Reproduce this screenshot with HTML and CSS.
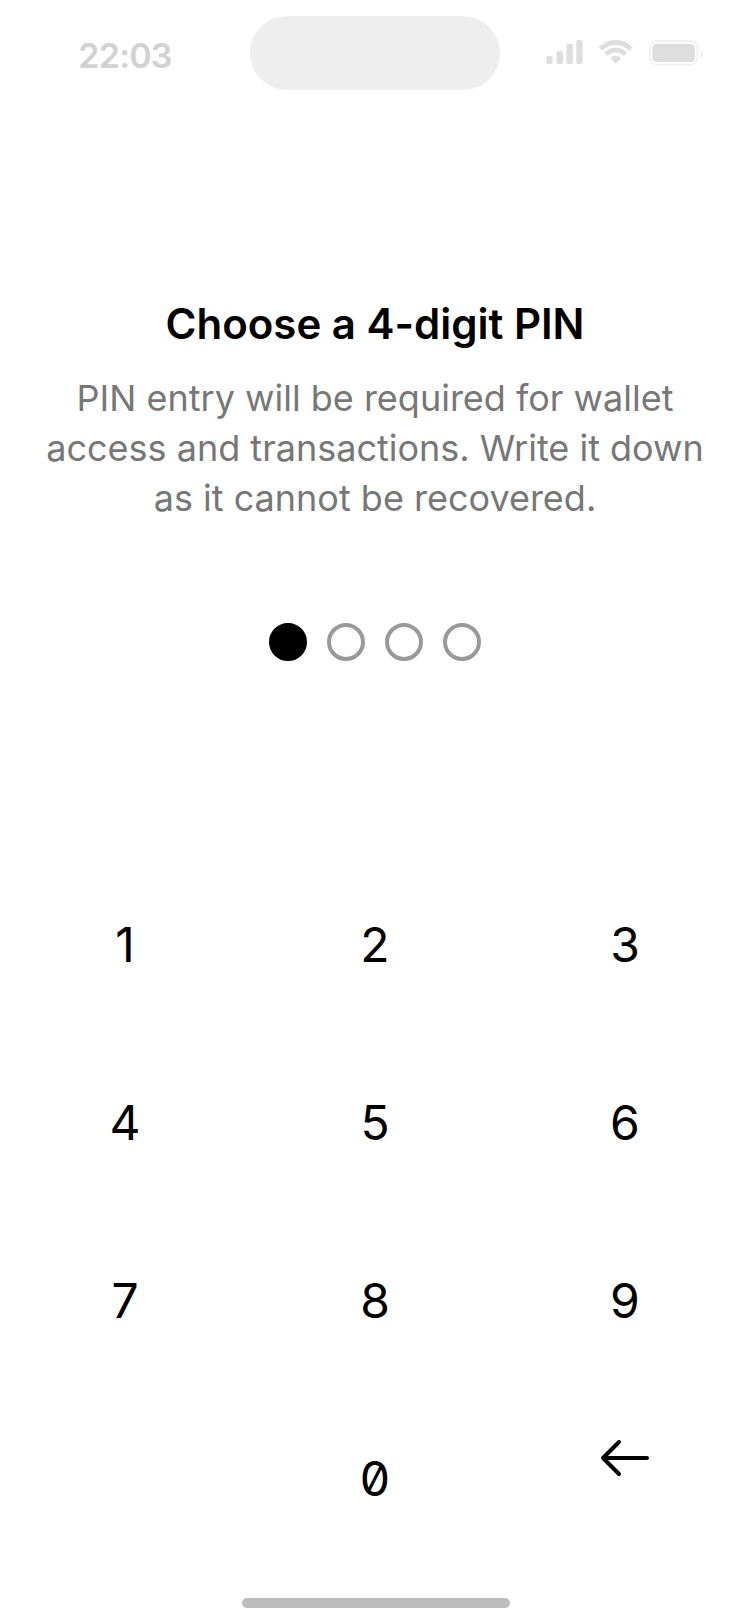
FILE: index.html
```html
<!DOCTYPE html>
<html lang="en">
<head>
<meta charset="utf-8">
<title>Choose a PIN</title>
<link rel="stylesheet" href="styles.css">
</head>
<body>
<main class="screen">
  <header class="status">
    <span class="time">22:03</span>
    <span class="island"></span>
    <svg class="indicators" width="160" height="30" viewBox="0 0 160 30">
      <g fill="#dedede">
        <rect x="1.300" y="18" width="6.400" height="8" rx="2"/>
        <rect x="11.500" y="13" width="6.400" height="13" rx="2"/>
        <rect x="21.500" y="5.700" width="6.400" height="20.300" rx="2"/>
        <rect x="31.300" y="2" width="6.400" height="24" rx="2"/>
        <rect x="107.300" y="5.700" width="42.700" height="18.400" rx="4.500"/>
        <path d="M70.700 25.700l-5.500-5.700a8 8 0 0 1 11 0z"/>
      </g>
      <g fill="none" stroke="#dedede">
        <path stroke-width="5" d="M55.450 11a21.200 21.200 0 0 1 30.500 0"/>
        <path stroke-width="4.700" d="M60.900 16.250a13.600 13.600 0 0 1 19.600 0"/>
      </g>
      <path fill="#efefef" d="M155.700 12v8.300c1.600-.7 2.500-2.400 2.500-4.150s-.9-3.450-2.500-4.150z"/>
      <rect x="105" y="3" width="47.600" height="23.700" rx="7" fill="none" stroke="#f2f2f2" stroke-width="2"/>
    </svg>
  </header>
  <section class="intro">
    <h1>Choose a 4-digit PIN</h1>
    <p>PIN entry will be required for wallet<br>access and transactions. Write it down<br>as it cannot be recovered.</p>
  </section>
  <div class="dots"><i class="dot filled"></i><i class="dot"></i><i class="dot"></i><i class="dot"></i></div>
  <div class="keypad">
    <span>1</span><span>2</span><span>3</span>
    <span>4</span><span>5</span><span>6</span>
    <span>7</span><span>8</span><span>9</span>
    <span></span><span class="zero">0</span>
    <span class="back"><svg width="50" height="38" viewBox="0 0 50 38" fill="none" stroke="#000" stroke-width="4" stroke-linecap="round" stroke-linejoin="round"><path d="M47 19H3M19 3L3 19l16 16"/></svg></span>
  </div>
  <div class="home"></div>
</main>
</body>
</html>
```
FILE: styles.css
```css
body { margin: 0; background: #fff; font-family: Inter, sans-serif; color: #000; }
.screen { width: 750px; height: 1624px; display: flex; flex-direction: column; align-items: center; overflow: hidden; }
.status { width: 750px; height: 299px; display: grid; grid-template-columns: 250px 250px 250px; align-items: start; flex: none; }
.time { font-size: 34px; line-height: 40px; font-weight: 600; letter-spacing: -0.8px; color: #d2d2d2; text-align: center; margin-top: 36px; }
.island { height: 74px; border-radius: 37px; background: #eee; margin-top: 16px; }
.indicators { margin: 38px 0 0 45px; }
.intro { text-align: center; height: 324px; flex: none; }
h1 { margin: 0; font-size: 42px; line-height: 50px; font-weight: 600; }
p { margin: 24px 0 0; font-size: 36px; line-height: 50px; color: #777; white-space: nowrap; }
.dots { display: flex; gap: 20px; height: 233px; flex: none; }
.dot { box-sizing: border-box; width: 38px; height: 38px; border: 4px solid #999; border-radius: 50%; }
.filled { background: #000; border-color: #000; }
.keypad { width: 750px; display: grid; grid-template-columns: repeat(3, 250px); grid-auto-rows: 178px; font-size: 48px; line-height: 178px; text-align: center; flex: none; }
.zero { font-feature-settings: "zero"; }
.back { display: flex; justify-content: center; padding-top: 49px; }
.home { width: 268px; height: 10px; border-radius: 5px; background: #bdbdbd; margin: 30px 0 0 2px; flex: none; }
```
